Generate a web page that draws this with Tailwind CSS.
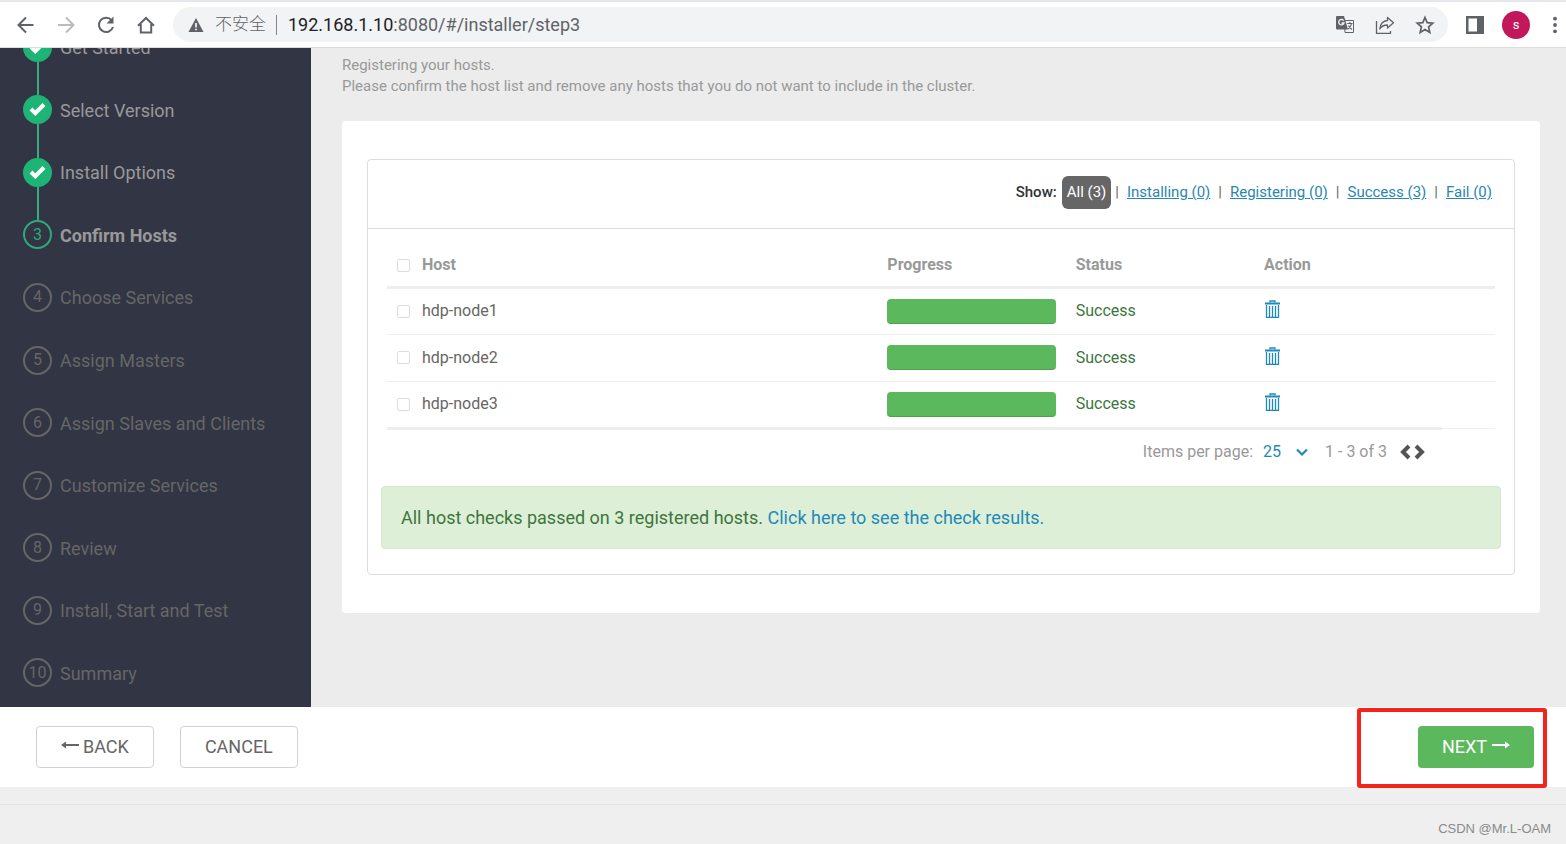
<!DOCTYPE html>
<html lang="en">
<head>
  <meta charset="UTF-8" />
  <meta name="viewport" content="width=device-width, initial-scale=1.0" />
  <title>Ambari - Confirm Hosts</title>
  <script src="https://cdn.jsdelivr.net/npm/@tailwindcss/browser@4"></script>
</head>
<body class="h-screen flex flex-col overflow-hidden bg-[#efefef] font-[Roboto,'Noto_Sans_CJK_SC',sans-serif] text-[#666]">

  <!-- BROWSER TOOLBAR -->
  <header class="h-12 shrink-0 flex items-center pl-4 pr-px bg-white border-t-2 border-t-[#e4e8ec] border-b border-b-[#dcdcdc] text-[#5f6368]">
    <nav class="flex items-center gap-5">
      <button aria-label="Back" class="size-5">
        <svg viewBox="0 0 20 20" class="size-5" fill="none" stroke="currentColor" stroke-width="2"><path d="M17.500 10H3M10 2.500L2.500 10l7.500 7.500" /></svg>
      </button>
      <button aria-label="Forward" class="size-5 text-[#babcbe]">
        <svg viewBox="0 0 20 20" class="size-5" fill="none" stroke="currentColor" stroke-width="2"><path d="M2 10h15M10 2.500l7.500 7.500-7.500 7.500" /></svg>
      </button>
      <button aria-label="Reload" class="size-5">
        <svg viewBox="0 0 20 20" class="size-5" fill="none" stroke="currentColor" stroke-width="2"><path d="M15.600 5.200A7.200 7.200 0 1 0 17 12" /><path d="M17.500 1.500v7h-7z" fill="currentColor" stroke="none" /></svg>
      </button>
      <button aria-label="Home" class="size-5">
        <svg viewBox="0 0 20 20" class="size-5" fill="none" stroke="currentColor" stroke-width="2"><path d="M2 10.800L10 3l8 7.800M4.800 9v8.500h10.400V9" /></svg>
      </button>
    </nav>

    <div class="flex-1 h-[35px] ml-[17px] mr-[17px] pl-[15px] pr-[13px] flex items-center rounded-full bg-[#f1f3f4]">
      <svg viewBox="0 0 16 16" class="w-4 h-4 shrink-0"><path d="M8 1l7.500 14H.5z" fill="#5f6368" /><path d="M7.200 6h1.600v4.500H7.200zM7.200 11.700h1.600v1.600H7.200z" fill="#fff" /></svg>
      <span class="ml-[11px] shrink-0 whitespace-nowrap text-[17px] font-light">不安全</span>
      <span class="ml-[10px] w-px h-5 bg-[#80868b]"></span>
      <div class="ml-[11px] flex-1 text-lg"><span class="text-[#202124]">192.168.1.10</span>:8080/#/installer/step3</div>
      <div class="flex items-center gap-5">
        <button aria-label="Translate" class="size-5">
          <svg viewBox="0 0 20 20" class="size-5"><path d="M9 5.500h9.500v12H10z" fill="none" stroke="#5f6368" /><path d="M2 1h7l4 13.500H2A1 1 0 0 1 1 13.500V2a1 1 0 0 1 1-1z" fill="#5f6368" /><path d="M8.700 5.700A2.700 2.700 0 1 0 9 8H6.500" fill="none" stroke="#f1f3f4" stroke-width="1.300" /><path d="M12.200 8.500h5.300M14.800 7v1.500M16.600 8.500c-.5 2.500-2 4.200-3.600 5.500M13.500 10.500c.7 1.500 2 3 3.500 4" fill="none" stroke="#5f6368" stroke-width="1.100" /></svg>
        </button>
        <button aria-label="Share" class="size-5">
          <svg viewBox="0 0 20 20" class="size-5" fill="none" stroke="#5f6368" stroke-width="1.300"><path d="M1.500 6v12.300h14V16" /><path d="M12.500 2.500l6 5.300-6 5.200V10C9 10 6.500 11.200 4.800 14c.4-4.500 3-8 7.700-8.500z" stroke-linejoin="round" /></svg>
        </button>
        <button aria-label="Bookmark" class="size-5">
          <svg viewBox="0 0 20 20" class="size-5" fill="none" stroke="#5f6368" stroke-width="1.700"><path d="M10 2.500l2.200 5.200 5.600.5-4.200 3.700 1.200 5.500-4.800-2.900-4.800 2.900 1.200-5.500-4.200-3.700 5.600-.5z" /></svg>
        </button>
      </div>
    </div>

    <button aria-label="Side panel" class="size-5">
      <svg viewBox="0 0 20 20" class="size-5"><path d="M1 1h18v18H1zM3.500 3.500v13H12v-13z" fill="#5f6368" fill-rule="evenodd" /></svg>
    </button>
    <button class="ml-[17px] size-7 rounded-full bg-[#c2185b] text-white text-[13px]">s</button>
    <button aria-label="Menu" class="ml-[15px] size-5">
      <svg viewBox="0 0 20 20" class="size-5" fill="#5f6368"><circle cx="10" cy="3.700" r="1.900" /><circle cx="10" cy="10" r="1.900" /><circle cx="10" cy="16.300" r="1.900" /></svg>
    </button>
  </header>

  <div class="flex-1 min-h-0 flex overflow-hidden">

    <!-- WIZARD STEPS -->
    <aside class="w-[311px] shrink-0 overflow-hidden bg-[#323544]">
      <ol id="steps" class="-mt-8 h-[688px] pl-[23px] grid grid-rows-11 text-lg"></ol>
    </aside>

    <!-- STEP CONTENT -->
    <main class="flex-1 pl-[31px] pr-[26px] pt-[7px] bg-[#ececec]">
      <p class="text-[15px] leading-[21px] text-[#999]">Registering your hosts.<br />Please confirm the host list and remove any hosts that you do not want to include in the cluster.</p>

      <div class="mt-6 px-[25px] py-[38px] rounded bg-white">
        <section class="pb-[25px] rounded border border-[#ddd]">
          <div class="h-[69px] pb-[3px] pr-[22px] flex items-center justify-end gap-2 border-b border-[#ddd] text-[15px]">
            <div class="flex items-center gap-[5px]">
              <span class="font-medium text-[#333]">Show:</span>
              <a href="#" class="h-[33px] px-[5px] flex items-center rounded-md bg-[#666] text-white">All (3)</a>
              <span class="-ml-px">|</span>
            </div>
            <a href="#" class="text-[#2a87b0] underline">Installing (0)</a>
            <span>|</span>
            <a href="#" class="text-[#2a87b0] underline">Registering (0)</a>
            <span>|</span>
            <a href="#" class="text-[#2a87b0] underline">Success (3)</a>
            <span>|</span>
            <a href="#" class="text-[#2a87b0] underline">Fail (0)</a>
          </div>

          <div class="px-[19px] pt-3">
            <table class="w-full table-fixed text-base text-left">
              <colgroup>
                <col class="w-[25px]" />
                <col class="w-[42%]" />
                <col class="w-[17%]" />
                <col class="w-[17%]" />
                <col />
              </colgroup>
              <thead class="text-[#999]">
                <tr class="h-[46px] border-b-3 border-[#eee]">
                  <th class="pt-1 pl-[10px]"><input type="checkbox" aria-label="Select all hosts" class="block size-[13px] appearance-none rounded-xs border border-[#ddd]" /></th>
                  <th class="pt-1 pl-[10px] font-bold">Host</th>
                  <th class="pt-1 pl-[10px] font-bold">Progress</th>
                  <th class="pt-1 pl-[10px] font-bold">Status</th>
                  <th class="pt-1 pl-[10px] font-bold">Action</th>
                </tr>
              </thead>
              <tbody id="hosts"></tbody>
            </table>

            <div class="h-[59px] flex items-start">
              <div class="flex-1 pr-4 pt-[6px] flex items-center justify-end border-t-3 border-[#eee] text-[#999]">
                <label for="pageSize">Items per page:</label>
                <div class="ml-[10px] flex items-center text-[#1f8ab8]">
                  <select id="pageSize" class="appearance-none w-8 h-8"><option>10</option><option selected>25</option><option>50</option></select>
                  <svg viewBox="0 0 14 10" class="w-[14px] h-[10px]" fill="none" stroke="currentColor" stroke-width="2.200"><path d="M2 2.500l5 5 5-5" /></svg>
                </div>
                <span class="ml-4">1 - 3 of 3</span>
                <button aria-label="Previous page" class="ml-3 text-[#555]"><svg viewBox="0 0 12 16" class="w-3 h-4" fill="none" stroke="currentColor" stroke-width="4"><path d="M10 2L4 8l6 6" /></svg></button>
                <button aria-label="Next page" class="ml-[3px] text-[#555]"><svg viewBox="0 0 12 16" class="w-3 h-4" fill="none" stroke="currentColor" stroke-width="4"><path d="M2 2l6 6-6 6" /></svg></button>
              </div>
              <div class="w-[53px] mt-px border-t border-[#eee]"></div>
            </div>
          </div>

          <div class="mx-[13px] h-[63px] px-[19px] flex items-center rounded border border-[#d6e9c6] bg-[#deefd7] text-lg text-[#3c763d]">
            <p>All host checks passed on 3 registered hosts. <a href="#" class="text-[#1f8ab8]">Click here to see the check results.</a></p>
          </div>
        </section>
      </div>
    </main>
  </div>

  <!-- WIZARD BUTTONS -->
  <div class="h-20 shrink-0 pl-9 pr-8 flex items-center justify-between bg-white text-lg">
    <div class="flex gap-[26px]">
      <button class="h-[42px] px-6 flex items-center gap-1 rounded border border-[#cfd3d7]">
        <svg viewBox="0 0 18 10" class="w-[18px] h-[10px] -mt-1" fill="currentColor"><path d="M0 5l5-3.500v2.600h13v1.800H5v2.600z" /></svg>
        BACK
      </button>
      <button class="h-[42px] px-6 rounded border border-[#cfd3d7]">CANCEL</button>
    </div>
    <div class="relative">
      <button class="h-[42px] px-6 flex items-center gap-[5px] rounded bg-[#5cb85c] text-white">
        NEXT
        <svg viewBox="0 0 18 10" class="w-[18px] h-[10px] -mt-1" fill="currentColor"><path d="M18 5l-5-3.500v2.600H0v1.800h13v2.600z" /></svg>
      </button>
      <div class="absolute -left-[61px] -right-[13px] -top-[18px] -bottom-5 rounded-[3px] border-4 border-[#f5231b] pointer-events-none"></div>
    </div>
  </div>

  <footer class="h-[57px] shrink-0 pt-[17px]">
    <div class="pt-4 pr-[15px] border-t border-[#e3e3e3] text-right font-['Liberation_Sans',sans-serif] text-[13px] leading-4 text-[#8a8a8a]">CSDN @Mr.L-OAM</div>
  </footer>

  <script>
    const steps = ["Get Started", "Select Version", "Install Options", "Confirm Hosts", "Choose Services", "Assign Masters", "Assign Slaves and Clients", "Customize Services", "Review", "Install, Start and Test", "Summary"];
    const current = 3;
    const check = '<svg viewBox="0 0 17 14" class="w-[17px] h-[14px] -mt-px" fill="none" stroke="#fff" stroke-width="4"><path d="M2 7l4.300 4.200L15 2.500"/></svg>';

    document.getElementById("steps").innerHTML = steps.map((name, i) => {
      const done = i < current;
      const circle = done ? "bg-[#1eb475] border-[#1eb475]" : i === current ? "border-[#2fa97c] text-[#2fa97c]" : "border-[#666] text-[#666]";
      const label = done ? "text-[#999]" : i === current ? "text-[#999] font-bold" : "text-[#666]";
      return `
        <li class="flex items-center gap-2">
          <div class="h-full flex flex-col items-center">
            <span class="w-[2px] flex-1 ${i <= current ? "bg-[#3aa882]" : ""}"></span>
            <span class="size-[29px] flex items-center justify-center rounded-full border-2 text-base ${circle}">${done ? check : i}</span>
            <span class="w-[2px] flex-1 ${done ? "bg-[#3aa882]" : ""}"></span>
          </div>
          <a href="#" class="pt-[2px] ${label}">${name}</a>
        </li>`;
    }).join("");

    document.getElementById("hosts").innerHTML = ["hdp-node1", "hdp-node2", "hdp-node3"].map((host, i) => `
      <tr class="${i < 2 ? "h-[47px] border-b border-[#eee]" : "h-[46px]"}">
        <td class="pl-[10px]"><input type="checkbox" id="${host}" class="block size-[13px] appearance-none rounded-xs border border-[#ddd]"></td>
        <td class="pl-[10px]"><label for="${host}">${host}</label></td>
        <td class="px-[10px]"><div role="progressbar" aria-label="${host} progress" aria-valuenow="100" class="h-[25px] rounded bg-[#5cb85c] border-b border-[#4f9f4f]"></div></td>
        <td class="pl-[10px] text-[#3c763d]">Success</td>
        <td class="pl-[11px]">
          <button aria-label="Remove ${host}" class="block -mt-1 text-[#1f8ab8]">
            <svg viewBox="0 0 15 18" class="w-[15px] h-[18px]" fill="none" stroke="currentColor"><path d="M0 3.500h15" stroke-width="2"/><path d="M5 2.500v-1.500h5v1.500M1.500 5v12.500h12V5M4.500 6v11M7.500 6v11M10.500 6v11" stroke-width="1.300"/></svg>
          </button>
        </td>
      </tr>`).join("");
  </script>
</body>
</html>
